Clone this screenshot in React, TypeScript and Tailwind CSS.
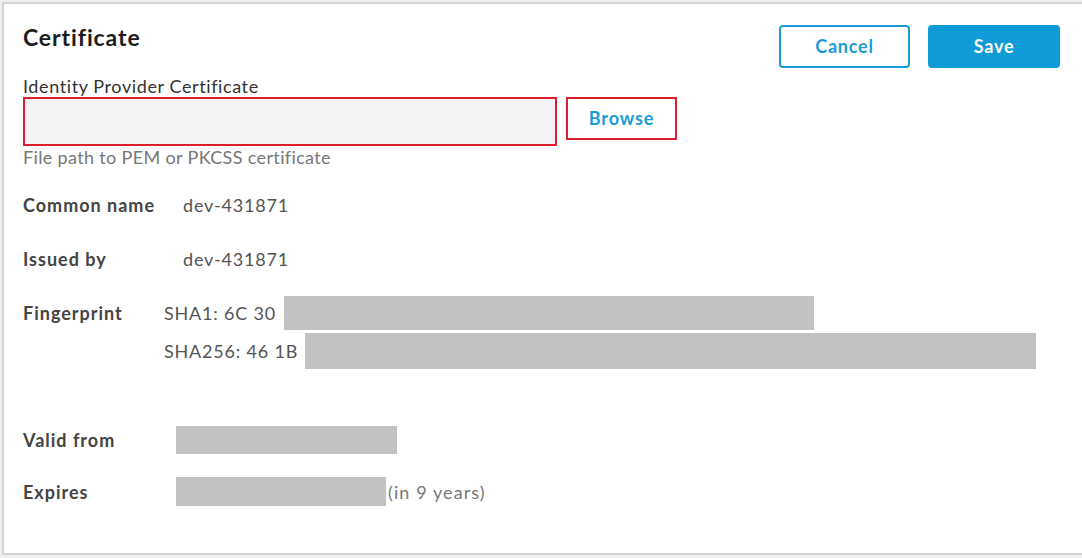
export default function App() {
  return (
    <div
      className="h-[558px] w-[1082px] bg-[#efefef] pt-[2px] pl-[2px] overflow-hidden"
      style={{ fontFamily: 'Lato, "Open Sans", sans-serif' }}
    >
      <div className="h-[553px] bg-white border-t-2 border-l-2 border-b-2 border-[#d4d4d4] pl-[19px] pr-[22px]">
        {/* Header */}
        <div className="flex items-start justify-between">
          <h1 className="mt-[19px] text-[23px] leading-[28px] font-bold tracking-[0.9px] text-[#1d1d1d]">
            Certificate
          </h1>
          <div className="mt-[21px] flex gap-[18px]">
            <button className="h-[43px] w-[131px] rounded-[4px] border-2 border-[#1a9cd6] bg-white text-[18px] font-bold tracking-[0.8px] text-[#1a9cd6]">
              Cancel
            </button>
            <button className="h-[43px] w-[132px] rounded-[4px] bg-[#0f9bd7] text-[18px] font-bold tracking-[0.8px] text-white">
              Save
            </button>
          </div>
        </div>

        {/* Certificate file */}
        <div className="mt-[8px] text-[18px] leading-[21px] tracking-[0.6px] text-[#333]">
          Identity Provider Certificate
        </div>
        <div className="flex items-start gap-[9px]">
          <div className="h-[49px] w-[534px] border-2 border-[#dc1e2c] bg-[#f3f3f3]" />
          <button className="h-[43px] w-[111px] border-2 border-[#dc1e2c] bg-white text-[18px] font-bold tracking-[0.9px] text-[#1a9cd6]">
            Browse
          </button>
        </div>
        <div className="text-[18px] leading-[22px] tracking-[0.35px] text-[#777]">
          File path to PEM or PKCSS certificate
        </div>

        {/* Details */}
        <div className="mt-[26px] flex h-[22px] items-center text-[18px] leading-[22px]">
          <div className="w-[160px] font-bold tracking-[1px] text-[#444]">Common name</div>
          <div className="tracking-[0.8px] text-[#555]">dev-431871</div>
        </div>
        <div className="mt-[32px] flex h-[22px] items-center text-[18px] leading-[22px]">
          <div className="w-[160px] font-bold tracking-[1px] text-[#444]">Issued by</div>
          <div className="tracking-[0.8px] text-[#555]">dev-431871</div>
        </div>
        <div className="mt-[26px] flex items-start text-[18px] leading-[22px]">
          <div className="flex h-[34px] w-[141px] items-center font-bold tracking-[1px] text-[#444]">
            Fingerprint
          </div>
          <div className="flex flex-col gap-[3px] tracking-[0.8px] text-[#555]">
            <div className="flex h-[34px] items-center">
              <span className="w-[120px]">SHA1: 6C 30</span>
              <div className="h-[34px] w-[530px] bg-[#c2c2c2]" />
            </div>
            <div className="flex h-[36px] items-center">
              <span className="w-[141px]">SHA256: 46 1B</span>
              <div className="h-[36px] w-[731px] bg-[#c2c2c2]" />
            </div>
          </div>
        </div>
        <div className="mt-[57px] flex h-[28px] items-center text-[18px] leading-[22px]">
          <div className="w-[153px] font-bold tracking-[1px] text-[#444]">Valid from</div>
          <div className="h-[28px] w-[221px] bg-[#c2c2c2]" />
        </div>
        <div className="mt-[23px] flex h-[29px] items-center text-[18px] leading-[22px]">
          <div className="w-[153px] font-bold tracking-[1px] text-[#444]">Expires</div>
          <div className="h-[29px] w-[210px] bg-[#c2c2c2]" />
          <span className="ml-[2px] tracking-[1.1px] text-[#777]">(in 9 years)</span>
        </div>
      </div>
    </div>
  );
}
